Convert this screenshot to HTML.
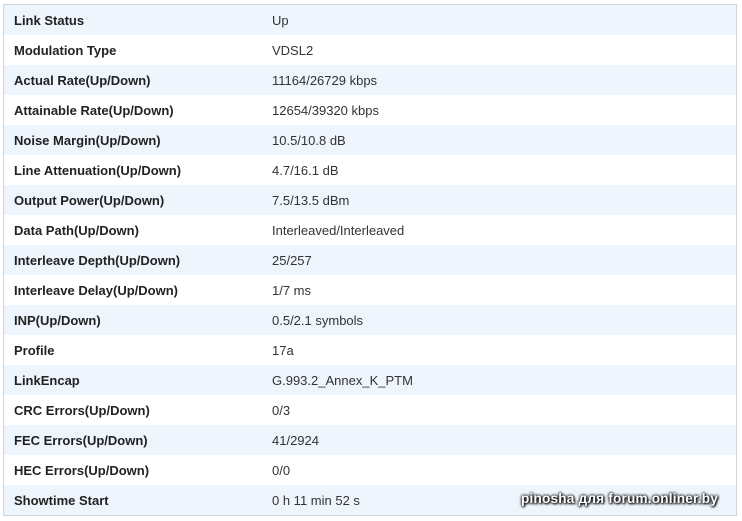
<!DOCTYPE html>
<html><head><style>
body{margin:0;background:#fff;width:742px;height:521px;overflow:hidden;font-family:"Liberation Sans","DejaVu Sans",sans-serif;}
.box{position:absolute;left:3px;top:4px;width:734px;height:512px;border:1px solid #d4d4d4;box-sizing:border-box;}
table{border-collapse:collapse;width:732px;position:absolute;left:0;top:0;table-layout:fixed;}
td{height:30px;padding:1px 0 0 0;box-sizing:border-box;font-size:13px;color:#333;white-space:nowrap;}
td.k{padding-left:10px;font-weight:bold;color:#222;}
tr:nth-child(odd){background:#eef5fd;}
.wm{position:absolute;left:521px;top:491px;font-size:13.6px;font-weight:bold;color:#fff;text-shadow:0 0 2px #000,0 0 3px #000,1px 1px 2px #000;letter-spacing:0.2px;}
</style></head><body>
<div class="box"><table>
<colgroup><col style="width:268px"><col style="width:464px"></colgroup>
<tr><td class="k">Link Status</td><td>Up</td></tr>
<tr><td class="k">Modulation Type</td><td>VDSL2</td></tr>
<tr><td class="k">Actual Rate(Up/Down)</td><td>11164/26729 kbps</td></tr>
<tr><td class="k">Attainable Rate(Up/Down)</td><td>12654/39320 kbps</td></tr>
<tr><td class="k">Noise Margin(Up/Down)</td><td>10.5/10.8 dB</td></tr>
<tr><td class="k">Line Attenuation(Up/Down)</td><td>4.7/16.1 dB</td></tr>
<tr><td class="k">Output Power(Up/Down)</td><td>7.5/13.5 dBm</td></tr>
<tr><td class="k">Data Path(Up/Down)</td><td>Interleaved/Interleaved</td></tr>
<tr><td class="k">Interleave Depth(Up/Down)</td><td>25/257</td></tr>
<tr><td class="k">Interleave Delay(Up/Down)</td><td>1/7 ms</td></tr>
<tr><td class="k">INP(Up/Down)</td><td>0.5/2.1 symbols</td></tr>
<tr><td class="k">Profile</td><td>17a</td></tr>
<tr><td class="k">LinkEncap</td><td>G.993.2_Annex_K_PTM</td></tr>
<tr><td class="k">CRC Errors(Up/Down)</td><td>0/3</td></tr>
<tr><td class="k">FEC Errors(Up/Down)</td><td>41/2924</td></tr>
<tr><td class="k">HEC Errors(Up/Down)</td><td>0/0</td></tr>
<tr><td class="k">Showtime Start</td><td>0 h 11 min 52 s</td></tr>
</table></div>
<div class="wm">pinosha для forum.onliner.by</div>
</body></html>
